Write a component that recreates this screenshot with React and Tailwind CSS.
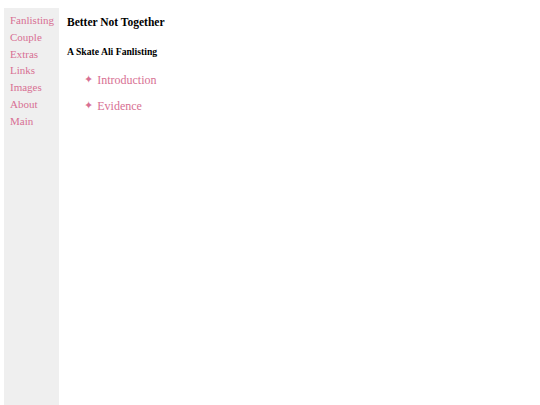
import React from "react";

const links = ["Fanlisting", "Couple", "Extras", "Links", "Images", "About", "Main"];
const sections = ["Introduction", "Evidence"];

export default function App() {
  return (
    <div className="flex h-screen bg-white pt-2 pl-1 font-['Liberation_Serif','Times_New_Roman',serif]">
      {/* Side menu */}
      <nav className="flex w-[55px] flex-col bg-[#efefef] px-[6px] pt-[4px]">
        {links.map((l) => (
          <a key={l} href="#" className="text-[11px] leading-[16.8px] text-[#d87093]">
            {l}
          </a>
        ))}
      </nav>

      {/* Main content */}
      <main className="ml-2 flex flex-col">
        <h1 className="mt-[7px] text-[11.5px] font-bold leading-[14px] text-black">Better Not Together</h1>
        <h2 className="mt-[17px] text-[9.7px] font-bold leading-[12px] text-black">A Skate Ali Fanlisting</h2>
        <ul className="mt-[15px] flex flex-col gap-[12px] pl-[17px]">
          {sections.map((s) => (
            <li key={s} className="flex items-center text-[12px] leading-[14px] text-[#d87093]">
              <span className="mr-[4px] font-['DejaVu_Sans',sans-serif] text-[11px] leading-[14px]">✦</span>
              <a href="#">{s}</a>
            </li>
          ))}
        </ul>
      </main>
    </div>
  );
}
